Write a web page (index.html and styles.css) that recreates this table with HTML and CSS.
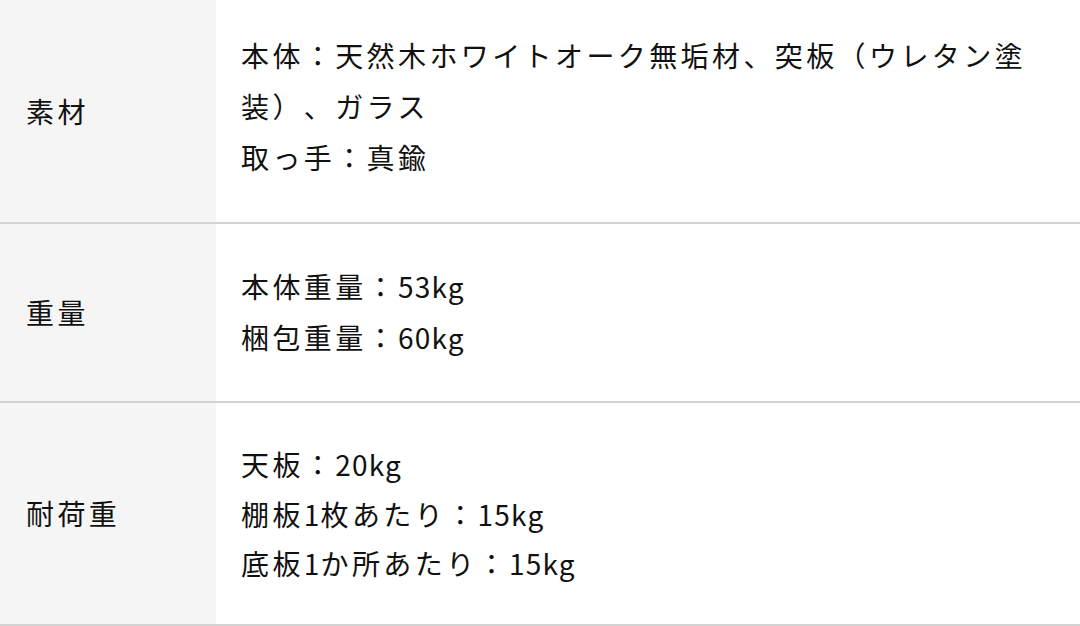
FILE: index.html
```html
<!DOCTYPE html>
<html lang="ja">
<head>
<meta charset="utf-8">
<link rel="stylesheet" href="styles.css">
</head>
<body>
<div class="spec">
  <div class="row row-first">
    <div class="label">素材</div>
    <div class="value">本体：天然木ホワイトオーク無垢材、突板（ウレタン塗装）、ガラス<br>取っ手：真鍮</div>
  </div>
  <div class="row row-mid">
    <div class="label">重量</div>
    <div class="value">本体重量：<span class="latin">53kg</span><br>梱包重量：<span class="latin">60kg</span></div>
  </div>
  <div class="row row-last">
    <div class="label">耐荷重</div>
    <div class="value">天板：<span class="latin">20kg</span><br>棚板<span class="latin">1</span>枚あたり：<span class="latin">15kg</span><br>底板<span class="latin">1</span>か所あたり：<span class="latin">15kg</span></div>
  </div>
</div>
</body>
</html>
```

FILE: styles.css
```css
html, body {
  margin: 0;
  padding: 0;
  background: #ffffff;
}
body {
  font-family: "Noto Sans CJK JP", "Noto Sans", sans-serif;
  color: #111111;
  font-size: 28px;
  letter-spacing: 3.4px;
  text-spacing-trim: space-all;
}
.spec {
  display: flex;
  flex-direction: column;
}
.row {
  display: grid;
  grid-template-columns: 216px 1fr;
  border-bottom: 2px solid #d2d2d2;
}
.label {
  background: #f5f5f5;
  display: flex;
  align-items: center;
  padding: 0 0 0 26px;
  line-height: 51px;
}
.value {
  padding: 37px 25px 38px 25px;
  line-height: 51px;
}
.latin {
  letter-spacing: 1.2px;
}
.row-first .value {
  padding-top: 30px;
  padding-bottom: 39px;
}
.row-last .value {
  line-height: 49.5px;
  padding-bottom: 35px;
}
```
